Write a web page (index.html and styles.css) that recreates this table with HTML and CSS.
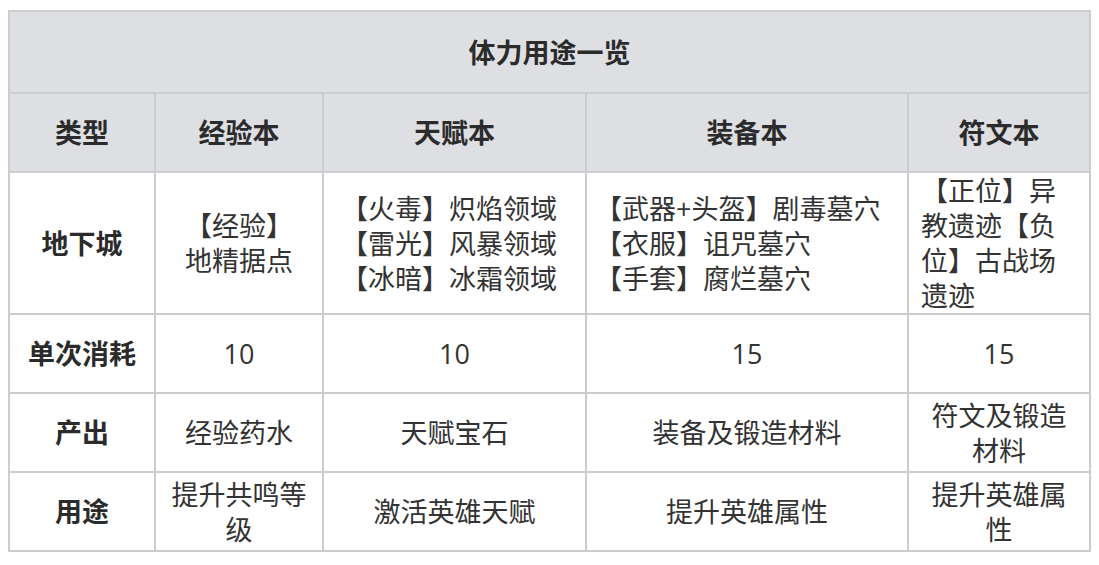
FILE: index.html
```html
<!DOCTYPE html>
<html lang="zh-CN">
<head>
<meta charset="utf-8">
<title>体力用途一览</title>
<link rel="stylesheet" href="styles.css">
</head>
<body>
<table class="stamina">
  <colgroup>
    <col class="c1"><col class="c2"><col class="c3"><col class="c4"><col class="c5">
  </colgroup>
  <tr class="row-title"><th colspan="5">体力用途一览</th></tr>
  <tr class="row-head">
    <th>类型</th><th>经验本</th><th>天赋本</th><th>装备本</th><th>符文本</th>
  </tr>
  <tr class="row-dungeon">
    <th>地下城</th>
    <td>【经验】<br>地精据点</td>
    <td class="left talent">【火毒】炽焰领域<br>【雷光】风暴领域<br>【冰暗】冰霜领域</td>
    <td class="left gear">【武器+头盔】剧毒墓穴<br>【衣服】诅咒墓穴<br>【手套】腐烂墓穴</td>
    <td class="left">【正位】异教遗迹【负位】古战场遗迹</td>
  </tr>
  <tr class="row-std">
    <th>单次消耗</th><td>10</td><td>10</td><td>15</td><td>15</td>
  </tr>
  <tr class="row-std">
    <th>产出</th><td>经验药水</td><td>天赋宝石</td><td>装备及锻造材料</td><td>符文及锻造材料</td>
  </tr>
  <tr class="row-std">
    <th>用途</th><td class="overhang">提升共鸣等级</td><td>激活英雄天赋</td><td>提升英雄属性</td><td class="overhang">提升英雄属性</td>
  </tr>
</table>
</body>
</html>
```

FILE: styles.css
```css
html, body {
  background: #ffffff;
}
body {
  margin: 10px 8px 8px 8px;
  font-family: "Open Sans", "Noto Sans CJK SC", sans-serif;
  color: #333333;
}
.stamina {
  border-collapse: collapse;
  table-layout: fixed;
  width: 1081px;
  font-size: 27px;
  line-height: 35px;
  border: 2px solid #cbccd0;
}
.c1 { width: 146px; }
.c2 { width: 168px; }
.c3 { width: 263px; }
.c4 { width: 322px; }
.c5 { width: 182px; }
.stamina th,
.stamina td {
  border: 2px solid #cbccd0;
  padding: 0 12px;
  text-align: center;
  vertical-align: middle;
}
.stamina th {
  font-weight: 700;
  color: #2b2b2b;
}
.row-title th,
.row-head th {
  background: #dedfe3;
}
.row-title th { height: 80px; }
.row-head th { height: 77px; }
.row-dungeon th,
.row-dungeon td { height: 140px; }
.row-std th,
.row-std td { height: 77px; }
.stamina td.left { text-align: left; }
.stamina td.talent { padding-left: 17px; padding-right: 4px; }
.stamina td.gear { padding-left: 8px; padding-right: 4px; }
.stamina td.overhang { box-shadow: 0 2px 0 #d3d4d8; }
```
